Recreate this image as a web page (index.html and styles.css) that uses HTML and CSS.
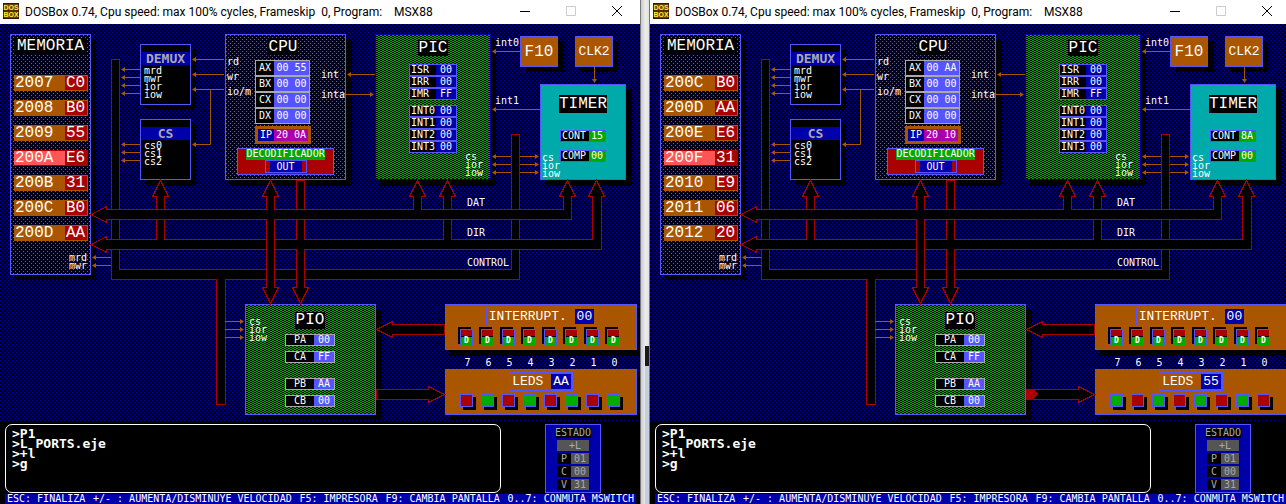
FILE: index.html
```
<!DOCTYPE html>
<html lang="es">
<head>
<meta charset="utf-8">
<title>MSX88</title>
<link rel="stylesheet" href="styles.css">
</head>
<body>
<main class="desktop" id="desktop"></main>

<template id="window-template">
<section class="window">
  <header class="titlebar">
    <svg class="app-icon" viewBox="0 0 16 16" aria-hidden="true">
      <rect width="16" height="16" fill="#2e1703"/>
      <rect x="1" y="1" width="14" height="14" fill="#6b3e08"/>
      <path d="M1 8h14" stroke="#3a1d02"/>
      <text x="8" y="7" class="icon-text">DOS</text>
      <text x="8" y="14" class="icon-text">BOX</text>
    </svg>
    <h1 class="title">DOSBox 0.74, Cpu speed: max 100% cycles, Frameskip  0, Program:    MSX88</h1>
    <div class="controls">
      <button class="control" aria-label="Minimizar"><svg viewBox="0 0 12 12"><path d="M1 5.500h10" stroke="#000"/></svg></button>
      <button class="control" aria-label="Maximizar"><svg viewBox="0 0 12 12"><path d="M1.500 .5h9v9h-9z" stroke="#ccc"/></svg></button>
      <button class="control" aria-label="Cerrar"><svg viewBox="0 0 12 12"><path d="M1 0l10 10M11 0L1 10" stroke="#000"/></svg></button>
    </div>
  </header>

  <div class="board">
    <div class="node memory">
      <h2 class="name">MEMORIA</h2>
      <table class="cells"><tbody data-rows="memory"></tbody></table>
      <div class="pins">mrd<br>mwr</div>
    </div>

    <div class="node decoder demux"><h2 class="decoder-name">DEMUX</h2><div class="pins">mrd<br>mwr<br>ior<br>iow</div></div>
    <div class="node decoder chip-select"><h2 class="decoder-name">CS</h2><div class="pins">cs0<br>cs1<br>cs2</div></div>

    <div class="node cpu">
      <div class="pins cpu-left">rd<br>wr<br>io/m</div>
      <div class="cpu-core">
        <h2 class="name">CPU</h2>
        <table class="registers"><tbody data-rows="registers"></tbody></table>
        <div class="pointer"><b>IP</b><span data-text="ip"></span></div>
      </div>
      <div class="pins cpu-right">int<br>inta</div>
      <div class="instruction"><span class="instruction-name">DECODIFICADOR</span><span class="opcode"><span>OUT</span></span></div>
    </div>

    <div class="node pic">
      <h2 class="name">PIC</h2>
      <table class="flags"><tbody data-rows="status"></tbody></table>
      <table class="flags"><tbody data-rows="vectors"></tbody></table>
      <div class="pins">cs<br>ior<br>iow</div>
    </div>

    <button class="node key f10">F10</button>
    <div class="node key clock">CLK2</div>

    <div class="node timer">
      <h2 class="name">TIMER</h2>
      <div class="counter"><b>CONT</b><span data-text="count"></span></div>
      <div class="counter"><b>COMP</b><span>00</span></div>
      <div class="pins">cs<br>ior<br>iow</div>
    </div>

    <div class="node pio">
      <div class="pins">cs<br>ior<br>iow</div>
      <h2 class="name">PIO</h2>
      <div class="ports" data-rows="ports"></div>
    </div>

    <div class="node panel interrupts">
      <h2 class="panel-name">INTERRUPT. <b>00</b></h2>
      <div class="bits" data-rows="switches"></div>
    </div>
    <div class="bit-numbers" data-rows="numbers"></div>
    <div class="node panel leds">
      <h2 class="panel-name">LEDS <b data-text="leds"></b></h2>
      <div class="bits" data-rows="leds"></div>
    </div>

    <svg class="wiring" viewBox="0 24 640 398" aria-hidden="true">
      <g class="bus">
        <path d="M111.500 59.500h8v210h392v-135h8v145h-408z"/>
        <path d="M225.500 279.500v125h-9v-125"/>
        <path class="joint" d="M217 278h8v3h-8z"/>
        <path d="M156.500 239.500v-43h-4l8-16 8 16h-4v43"/>
        <path d="M443.500 239.500v-43h-4l8-16 8 16h-4v43"/>
        <path d="M91.500 244.500l15-8v3h486v-43h-4l8-16 8 16h-3v53h-495v3z"/>
        <path class="joint" d="M157 238h7v3h-7zM444 238h7v3h-7z"/>
        <path d="M296.500 180.500h8v59h-8z"/>
        <path d="M413.500 209.500v-13h-4l8-16 8 16h-4v13"/>
        <path d="M91.500 214.500l15-8v3h457v-13h-4l8-16 8 16h-4v23h-465v3z"/>
        <path class="joint" d="M414 208h7v3h-7z"/>
        <path d="M266.500 209.500v-13h-4l8-16 8 16h-4v13"/>
        <path d="M266.500 219.500v68h-4l8 16 8-16h-4v-68"/>
        <path d="M296.500 249.500v38h-4l8 16 8-16h-4v-38"/>
        <path class="joint" d="M267 208h7v13h-7zM297 238h7v13h-7z"/>
        <path d="M444.500 324.500h-52v-3l-16 8 16 8v-3h52z"/>
        <path d="M376.500 389.500h52v-3l16 8-16 8v-3h-52z"/>
        <path class="pulse" d="M376 389h8l4 5-4 5h-8z"/>
      </g>
      <g class="wire">
        <path d="M140 69.500h-18M140 77.500h-18M140 85.500h-18M140 93.500h-18M140 144.500h-18M140 152.500h-18M140 160.500h-18"/>
        <path d="M224 59.500h-31M224 74.500h-31M224 89.500h-31M210.500 90v54.500H193"/>
        <path d="M375 74.500h-27M346 94.500h27M520 51.500h-27M540 109.500h-47M594.500 67v15"/>
        <path d="M493 156.500h18M493 164.500h18M493 172.500h18M520 156.500h18M520 164.500h18M520 172.500h18"/>
        <path d="M111 257.500H93M111 265.500H93M225 321.500h18M225 329.500h18M225 337.500h18"/>
      </g>
      <g class="heads">
        <path d="M121 69.500l4-2.500v5zM121 77.500l4-2.500v5zM121 85.500l4-2.500v5zM121 93.500l4-2.500v5zM121 144.500l4-2.500v5zM121 152.500l4-2.500v5zM121 160.500l4-2.500v5z"/>
        <path d="M192 59.500l4-2.500v5zM192 74.500l4-2.500v5zM192 89.500l4-2.500v5zM192 144.500l4-2.500v5z"/>
        <path d="M347 74.500l4-2.500v5zM374 94.500l-4-2.500v5zM492 51.500l4-2.500v5zM492 109.500l4-2.500v5zM594.500 83l-2.500-4h5z"/>
        <path d="M492 156.500l4-2.500v5zM492 164.500l4-2.500v5zM492 172.500l4-2.500v5zM539 156.500l-4-2.500v5zM539 164.500l-4-2.500v5zM539 172.500l-4-2.500v5z"/>
        <path d="M92 257.500l4-2.500v5zM92 265.500l4-2.500v5zM244 321.500l-4-2.500v5zM244 329.500l-4-2.500v5zM244 337.500l-4-2.500v5z"/>
      </g>
    </svg>
    <span class="signal int0">int0</span>
    <span class="signal int1">int1</span>
    <span class="signal dat">DAT</span>
    <span class="signal dir">DIR</span>
    <span class="signal ctl">CONTROL</span>
  </div>

  <div class="console">
    <pre class="terminal">&gt;P1
&gt;L PORTS.eje
&gt;+l
&gt;g</pre>
    <div class="state">
      <h2 class="state-name">ESTADO</h2>
      <div class="state-mode">+L</div>
      <div class="state-row"><b>P</b><span>01</span></div>
      <div class="state-row"><b>C</b><span>00</span></div>
      <div class="state-row"><b>V</b><span>31</span></div>
    </div>
  </div>
  <footer class="help"><span>ESC: FINALIZA</span><span>+/- : AUMENTA/DISMINUYE VELOCIDAD</span><span>F5: IMPRESORA</span><span>F9: CAMBIA PANTALLA</span><span>0..7: CONMUTA MSWITCH</span></footer>
</section>
</template>
<script src="app.js"></script>
</body>
</html>
```
FILE: styles.css
```
:root {
  --blue: #0000aa;
  --bright: #5555ff;
  --orange: #aa5500;
  --red: #aa0000;
  --green: #00aa00;
  --gray: #aaaaaa;
  --large: 16px/16px "Liberation Mono", monospace;
  --medium: 13px/15px "Liberation Mono", monospace;
  --small: 10px/10px "DejaVu Sans Mono", monospace;
}
* { box-sizing: border-box; }
body { margin: 0; background: #ddd; }
h1, h2, pre { margin: 0; font-weight: normal; }
b { font-weight: normal; }
button { padding: 0; border: 0; background: none; color: inherit; }
table { border-collapse: separate; border-spacing: 0; }
th, td { padding: 0; font-weight: normal; }

.desktop { display: grid; grid-template-columns: 640fr 10px 636fr; min-height: 100vh; }
.window { min-width: 0; overflow: hidden; display: flex; flex-direction: column; background: #000; color: #fff; }
.divider {
  border: solid #777; border-width: 0 1px;
  background: linear-gradient(90deg, #ccc, #eee 60%, #ddd);
  display: flex; flex-direction: column; align-items: flex-end; justify-content: flex-end;
}
.divider::before { content: ""; width: 4px; height: 20px; background: #1a1a1a; }
.divider::after { content: ""; width: 4px; height: 138px; background: #c3cfdd; }

.titlebar { min-width: 640px; height: 24px; padding-left: 3px; display: flex; align-items: center; gap: 6px; background: #fff; color: #000; }
.app-icon { width: 16px; height: 16px; margin-bottom: 2px; }
.icon-text { font: bold 7px "Liberation Sans", sans-serif; fill: #ffee22; text-anchor: middle; }
.title { flex: 1; white-space: pre; font: 12px/20px Roboto, sans-serif; padding-bottom: 1px; }
.controls { display: flex; }
.control { width: 46px; height: 22px; display: flex; align-items: center; justify-content: center; }
.control svg { width: 12px; height: 12px; fill: none; }

.board {
  position: relative; flex: none; min-width: 640px; height: 398px;
  background:
    conic-gradient(at 1px 1px, transparent 75%, var(--blue) 0) 0 0 / 4px 4px,
    conic-gradient(at 1px 1px, transparent 75%, var(--blue) 0) 2px 2px / 4px 4px,
    #000;
}
.memory, .cpu {
  background:
    conic-gradient(at 1px 1px, transparent 75%, var(--bright) 0) 0 0 / 4px 4px,
    conic-gradient(at 1px 1px, transparent 75%, var(--bright) 0) 2px 2px / 4px 4px,
    #00001c;
}
.pic, .pio { background: conic-gradient(at 2px 1px, #000 25%, var(--green) 0 50%, #000 0 75%, var(--green) 0) 0 0 / 4px 2px; }
.wiring { position: absolute; left: 0; top: 0; width: 640px; height: 398px; pointer-events: none; }
.bus { fill: #000; stroke: var(--red); shape-rendering: crispEdges; }
.bus .joint { stroke: none; }
.bus .pulse { fill: var(--red); stroke: none; display: none; }
.sending .pulse { display: inline; }
.wire { fill: none; stroke: var(--orange); }
.heads { fill: var(--orange); }

.node { position: absolute; border: 1px solid var(--bright); box-shadow: 5px 5px 0 #000; color: #fff; }
.name { width: max-content; margin: 0 auto; padding: 0 1px; background: #000; font: var(--large); }
.pins { font: var(--small); line-height: 8px; }

.memory { left: 10px; top: 10px; width: 81px; height: 241px; padding: 3px; }
.memory .name { padding: 0 3px; }
.cells { width: 74px; margin-top: 12px; border-spacing: 0 9px; font: var(--large); text-align: left; }
.cells th, .cells td { height: 16px; border: 1px solid var(--orange); border-width: 1px 0; background: var(--orange); line-height: 14px; }
.cells th { padding-left: 1px; }
.cells td { width: 23px; background: var(--red); border-right-width: 1px; padding-left: 1px; }
.cells .current th { background: #ff5555; border-color: var(--red); }
.cells .current td { border-color: var(--red); }
.memory .pins { text-align: right; padding: 4px 0 0; }

.decoder { left: 140px; width: 51px; height: 61px; padding: 7px 1px; background: #000; }
.demux { top: 20px; }
.chip-select { top: 95px; }
.decoder-name { background: var(--blue); color: var(--gray); font: bold 13px/13px "DejaVu Sans Mono", monospace; text-align: center; }
.decoder .pins { padding: 2px; }

.cpu { left: 225px; top: 10px; width: 121px; height: 146px; padding: 4px 1px; display: grid; grid-template-columns: 28px 56px 1fr; align-content: start; row-gap: 4px; }
.cpu-left { line-height: 15px; padding-top: 15px; }
.cpu-right { line-height: 20px; padding: 26px 0 0 10px; }
.registers { width: 55px; margin-top: 5px; font: var(--small); }
.registers th, .registers td { height: 16px; border: 1px solid var(--gray); text-align: center; }
.registers th { width: 19px; background: #000; border-right: 0; }
.registers td { background: var(--bright); border-left: 0; }
.pointer { margin-top: 2px; height: 18px; border: 3px solid var(--orange); display: flex; font: var(--small); line-height: 12px; text-align: center; background: #aa00aa; }
.pointer b { width: 16px; background: var(--blue); }
.pointer span { flex: 1; }
.instruction { grid-column: 1 / -1; margin: 0 11px 0 10px; height: 27px; border: 1px solid var(--bright); background: var(--red); display: flex; flex-direction: column; align-items: center; font: var(--small); }
.instruction-name { background: var(--green); height: 11px; }
.opcode { width: 42px; height: 13px; border: 1px solid var(--bright); padding: 0 4px; text-align: center; }
.opcode span { display: block; background: var(--blue); line-height: 11px; }

.pic { left: 375px; top: 10px; width: 116px; height: 146px; padding-top: 5px; border-color: var(--blue); }
.flags { width: 48px; margin: 8px 0 0 33px; font: var(--small); }
.flags + .flags { margin-top: 5px; }
.flags th, .flags td { height: 12px; border: 1px solid var(--bright); text-align: left; }
.flags th { background: #000; border-right: 0; width: 27px; padding-left: 1px; }
.flags td { background: var(--blue); border-left: 0; padding-left: 4px; }
.pic .pins { padding-left: 89px; }

.key { top: 12px; width: 38px; height: 31px; background: var(--orange); font: var(--medium); display: flex; align-items: center; justify-content: center; }
.f10 { left: 520px; font: var(--large); }
.clock { left: 575px; }

.timer { left: 540px; top: 60px; width: 86px; height: 96px; padding: 10px 1px; background: #00aaaa; }
.timer .name { margin-bottom: 17px; padding: 1px 0; }
.counter { margin: 0 auto 8px 18px; width: 46px; height: 12px; border: 1px solid var(--bright); display: flex; background: var(--green); font: var(--small); }
.counter b { width: 28px; background: #000; padding-left: 1px; }
.counter span { flex: 1; text-align: center; }
.timer .pins { margin-top: -16px; }

.pio { left: 245px; top: 280px; width: 131px; height: 111px; padding: 7px 3px; display: grid; grid-template-columns: 36px 50px; align-content: start; row-gap: 5px; }
.pio .pins { padding-top: 6px; height: 17px; }
.ports { grid-column: 2; display: grid; gap: 5px; }
.port { height: 12px; border: 1px solid var(--gray); background: var(--bright); display: flex; font: var(--small); text-align: center; }
.port:nth-child(3) { margin-top: 10px; }
.port b { width: 28px; background: #000; }
.port span { flex: 1; }

.panel { left: 445px; width: 192px; height: 46px; padding-top: 2px; background: var(--orange); }
.interrupts { top: 280px; }
.leds { top: 345px; }
.panel-name { width: max-content; height: 19px; margin: 0 auto; padding: 1px 1px 0 2px; border: 1px solid var(--bright); font: var(--medium); white-space: pre; }
.panel-name b { display: inline-block; padding: 0 2px; background: var(--blue); }
.bits, .bit-numbers { display: grid; grid-template-columns: repeat(8, 13px); gap: 8px; }
.bits { padding: 3px 0 0 14px; }
.switch { height: 17px; box-shadow: -2px -2px 0 #000; border: 1px solid var(--bright); background: linear-gradient(var(--red) 6px, #000 6px 7px, var(--bright) 7px 8px, var(--green) 8px); font: bold 8px/8px "DejaVu Sans Mono", monospace; display: flex; align-items: flex-end; justify-content: center; color: #fff; }
.led { height: 13px; border: 1px solid var(--bright); box-shadow: 3px 3px 0 #000; background: var(--red); }
.led.on { background: var(--green); }
.bit-numbers { position: absolute; left: 461px; top: 334px; font: var(--small); text-align: center; }
.signal { position: absolute; font: var(--small); }
.int0 { left: 495px; top: 14px; }
.int1 { left: 495px; top: 72px; }
.dat { left: 467px; top: 174px; }
.dir { left: 467px; top: 204px; }
.ctl { left: 467px; top: 234px; }

.console { flex: 1; min-width: 640px; padding: 2px 39px 1px 5px; display: flex; gap: 44px; background: #000; }
.terminal { flex: 1; border: 1px solid #fff; border-radius: 7px; padding: 4px 6px; font: bold 13px/10px "DejaVu Sans Mono", monospace; }
.state { width: 56px; border: 1px solid var(--bright); background: var(--blue); color: var(--gray); padding: 3px 0 2px; display: flex; flex-direction: column; align-items: center; gap: 2px; font: var(--small); }
.state-name { background: #000; font: var(--small); }
.state-mode { width: 32px; background: #555; padding-left: 12px; line-height: 11px; }
.state-row { width: 32px; height: 11px; display: flex; background: #555; line-height: 11px; text-align: center; }
.state-row b { width: 14px; background: #000; }
.state-row span { flex: 1; }
.help { flex: none; width: 631px; height: 10px; margin-left: 5px; padding: 0 2px; display: flex; justify-content: space-between; background: var(--blue); font: var(--small); white-space: nowrap; }
```
FILE: app.js
```
const machines = [
  {
    memory: [["2007", "C0"], ["2008", "B0"], ["2009", "55"], ["200A", "E6"], ["200B", "31"], ["200C", "B0"], ["200D", "AA"]],
    ax: "00 55", ip: "20 0A", count: "15", pb: "AA", leds: "AA", sending: false
  },
  {
    memory: [["200C", "B0"], ["200D", "AA"], ["200E", "E6"], ["200F", "31"], ["2010", "E9"], ["2011", "06"], ["2012", "20"]],
    ax: "00 AA", ip: "20 10", count: "8A", pb: "AA", leds: "55", sending: true
  }
];

const bits = [7, 6, 5, 4, 3, 2, 1, 0];
const tableRow = ([name, value], current) =>
  `<tr${current ? ' class="current"' : ""}><th scope="row">${name}</th><td>${value}</td></tr>`;

function rowsFor(machine) {
  const lit = parseInt(machine.leds, 16);
  return {
    memory: machine.memory.map((cell, i) => tableRow(cell, i === 3)),
    registers: [["AX", machine.ax], ["BX", "00 00"], ["CX", "00 00"], ["DX", "00 00"]].map(r => tableRow(r)),
    status: [["ISR", "00"], ["IRR", "00"], ["IMR", "FF"]].map(r => tableRow(r)),
    vectors: [["INT0", "00"], ["INT1", "00"], ["INT2", "00"], ["INT3", "00"]].map(r => tableRow(r)),
    ports: [["PA", "00"], ["CA", "FF"], ["PB", machine.pb], ["CB", "00"]]
      .map(([name, value]) => `<div class="port"><b>${name}</b><span>${value}</span></div>`),
    switches: bits.map(n => `<button class="switch" aria-label="Conmutador ${n}">D</button>`),
    numbers: bits.map(n => `<span>${n}</span>`),
    leds: bits.map(n => `<span class="led${lit >> n & 1 ? "" : " on"}"></span>`)
  };
}

const desktop = document.getElementById("desktop");
const template = document.getElementById("window-template");

machines.forEach((machine, index) => {
  const view = template.content.cloneNode(true);
  const rows = rowsFor(machine);
  view.querySelectorAll("[data-rows]").forEach(el => { el.innerHTML = rows[el.dataset.rows].join(""); });
  view.querySelectorAll("[data-text]").forEach(el => { el.textContent = machine[el.dataset.text]; });
  if (machine.sending) view.querySelector(".window").classList.add("sending");
  if (index > 0) {
    const divider = document.createElement("div");
    divider.className = "divider";
    desktop.append(divider);
  }
  desktop.append(view);
});
```
